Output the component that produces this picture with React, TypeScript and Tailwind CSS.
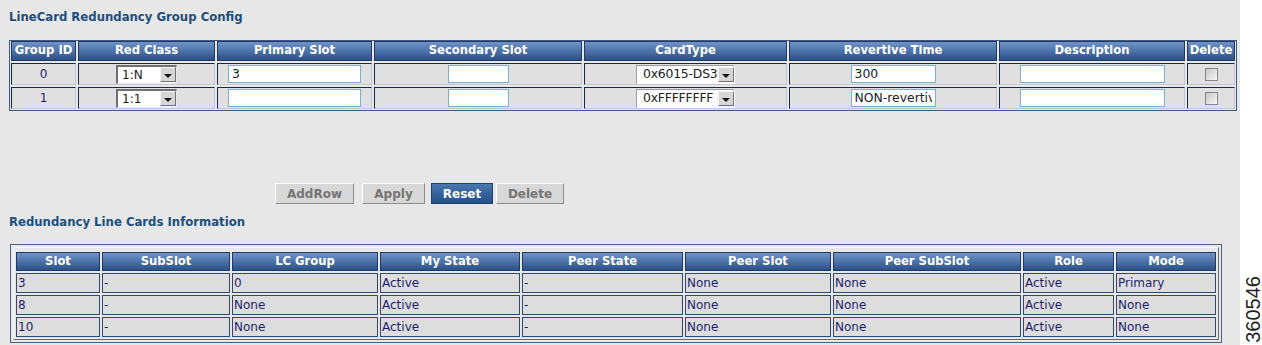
import React from 'react';

const groupHeaders = ['Group ID', 'Red Class', 'Primary Slot', 'Secondary Slot', 'CardType', 'Revertive Time', 'Description', 'Delete'];

const groupRows = [
  { id: '0', redClass: '1:N', primary: '3', cardType: '0x6015-DS38', revertive: '300' },
  { id: '1', redClass: '1:1', primary: '', cardType: '0xFFFFFFFF -1', revertive: 'NON-revertive' },
];

const lcHeaders = ['Slot', 'SubSlot', 'LC Group', 'My State', 'Peer State', 'Peer Slot', 'Peer SubSlot', 'Role', 'Mode'];

const lcRows = [
  ['3', '-', '0', 'Active', '-', 'None', 'None', 'Active', 'Primary'],
  ['8', '-', 'None', 'Active', '-', 'None', 'None', 'Active', 'None'],
  ['10', '-', 'None', 'Active', '-', 'None', 'None', 'Active', 'None'],
];

function HeaderCell({ label }: { label: string }) {
  return (
    <div className="flex items-center justify-center border border-[#22385f] bg-linear-to-b from-[#7094c7] to-[#2a5189] text-[11.6px] font-bold text-white leading-none whitespace-nowrap overflow-hidden">
      {label}
    </div>
  );
}

function ArrowBox() {
  return (
    <div className="flex h-[15px] w-[16px] shrink-0 items-center justify-center border border-t-[#f4f4f4] border-l-[#f4f4f4] border-r-[#6f6f6f] border-b-[#6f6f6f] bg-[#d6d6d6] pt-[3px]">
      <div className="h-0 w-0 border-x-[4px] border-t-[4px] border-x-transparent border-t-[#111]" />
    </div>
  );
}

function RedClassSelect({ value }: { value: string }) {
  return (
    <div className="flex h-[19px] w-[61px] items-center border-t-2 border-l-2 border-b border-r border-t-[#707070] border-l-[#707070] border-b-[#e8e8e8] border-r-[#e8e8e8] bg-white">
      <span className="flex-1 pl-[4px] text-[12px] text-[#222] leading-none">{value}</span>
      <ArrowBox />
    </div>
  );
}

function CardTypeSelect({ value }: { value: string }) {
  return (
    <div className="flex h-[19px] w-[99px] items-center border-t border-l border-b border-r border-t-[#9a9a9a] border-l-[#9a9a9a] border-b-white border-r-white bg-white">
      <span className="min-w-0 flex-1 overflow-hidden whitespace-nowrap pl-[6px] text-[12.4px] tracking-[-0.2px] text-[#222] leading-none">{value}</span>
      <ArrowBox />
    </div>
  );
}

function TextBox({ value, width }: { value: string; width: string }) {
  return (
    <input
      readOnly
      value={value}
      className={`${width} h-[18px] border border-[#76b3d3] bg-white px-[3px] text-[12.4px] text-[#222] outline-none`}
    />
  );
}

function Checkbox() {
  return <div className="h-[13px] w-[13px] border border-[#858686] bg-linear-to-br from-[#c6c6c6] to-[#fafafa]" />;
}

function GroupCell({ children }: { children: React.ReactNode }) {
  return (
    <div className="flex items-center justify-center border border-t-[#1c2747] border-l-[#1c2747] border-r-[#c4c8d0] border-b-[#c4c8d0] bg-[#e0e0e0] text-[12px] text-[#1d1d6e]">
      {children}
    </div>
  );
}

export default function App() {
  return (
    <div className="relative h-[345px] w-[1262px] overflow-hidden bg-white font-['DejaVu_Sans',sans-serif]">
      <div className="flex h-full w-[1240px] flex-col bg-[#e7e7e7]">
        <h2 className="ml-[9px] mt-[10px] h-[14px] text-[11.7px] font-bold leading-[14px] text-[#1d4e7e]">
          LineCard Redundancy Group Config
        </h2>

        <div className="ml-[9px] mt-[16px] w-[1228px] border border-[#3d5a85] px-[1px] pb-[1px]">
          <div className="grid grid-cols-[65px_137px_155px_208px_203px_208px_186px_48px] grid-rows-[20px_22px_22px] gap-[2px]">
            {groupHeaders.map((h) => (
              <HeaderCell key={h} label={h} />
            ))}
            {groupRows.map((r) => (
              <React.Fragment key={r.id}>
                <GroupCell>{r.id}</GroupCell>
                <GroupCell>
                  <RedClassSelect value={r.redClass} />
                </GroupCell>
                <GroupCell>
                  <TextBox value={r.primary} width="w-[133px]" />
                </GroupCell>
                <GroupCell>
                  <TextBox value="" width="w-[61px]" />
                </GroupCell>
                <GroupCell>
                  <CardTypeSelect value={r.cardType} />
                </GroupCell>
                <GroupCell>
                  <TextBox value={r.revertive} width="w-[85px]" />
                </GroupCell>
                <GroupCell>
                  <TextBox value="" width="w-[145px]" />
                </GroupCell>
                <GroupCell>
                  <Checkbox />
                </GroupCell>
              </React.Fragment>
            ))}
          </div>
        </div>

        {/* action buttons */}
        <div className="mt-[72px] flex h-[21px] items-stretch text-[12px] font-bold">
          <button className="ml-[275px] w-[79px] border border-t-white border-l-white border-r-[#8c8c8c] border-b-[#8c8c8c] bg-[#d8d8d8] text-[#747474]">
            AddRow
          </button>
          <button className="ml-[8px] w-[63px] border border-t-white border-l-white border-r-[#8c8c8c] border-b-[#8c8c8c] bg-[#d8d8d8] text-[#747474]">
            Apply
          </button>
          <button className="ml-[6px] w-[62px] border border-[#1f3f6e] bg-linear-to-b from-[#4b77b0] to-[#24508a] text-white">
            Reset
          </button>
          <button className="ml-[3px] w-[68px] border border-t-white border-l-white border-r-[#8c8c8c] border-b-[#8c8c8c] bg-[#d8d8d8] text-[#747474]">
            Delete
          </button>
        </div>

        <h2 className="ml-[9px] mt-[11px] h-[14px] text-[11.7px] font-bold leading-[14px] text-[#1d4e7e]">
          Redundancy Line Cards Information
        </h2>

        <div className="ml-[10px] mt-[15px] w-[1212px] border border-[#4a6187] p-[2px]">
          <div className="border border-t-[#f6f6f6] border-l-[#f6f6f6] border-r-[#6c6c6c] border-b-[#6c6c6c] px-[2px] pt-[4px] pb-[2px]">
            <div className="grid grid-cols-[84px_128px_146px_140px_161px_146px_188px_91px_100px] grid-rows-[19px_20px_20px_20px] gap-[2px]">
              {lcHeaders.map((h) => (
                <HeaderCell key={h} label={h} />
              ))}
              {lcRows.map((row, i) =>
                row.map((v, j) => (
                  <div
                    key={`${i}-${j}`}
                    className="flex items-center border border-[#34466a] bg-[#dddddd] pl-[1px] text-[12px] leading-none text-[#1d1d6e] whitespace-nowrap overflow-hidden"
                  >
                    {v}
                  </div>
                ))
              )}
            </div>
          </div>
        </div>
      </div>

      {/* figure number */}
      <span className="absolute left-[1243px] top-[276px] rotate-180 font-['Liberation_Sans',sans-serif] text-[20px] leading-[20px] text-[#222] [writing-mode:vertical-rl]">
        360546
      </span>
    </div>
  );
}
